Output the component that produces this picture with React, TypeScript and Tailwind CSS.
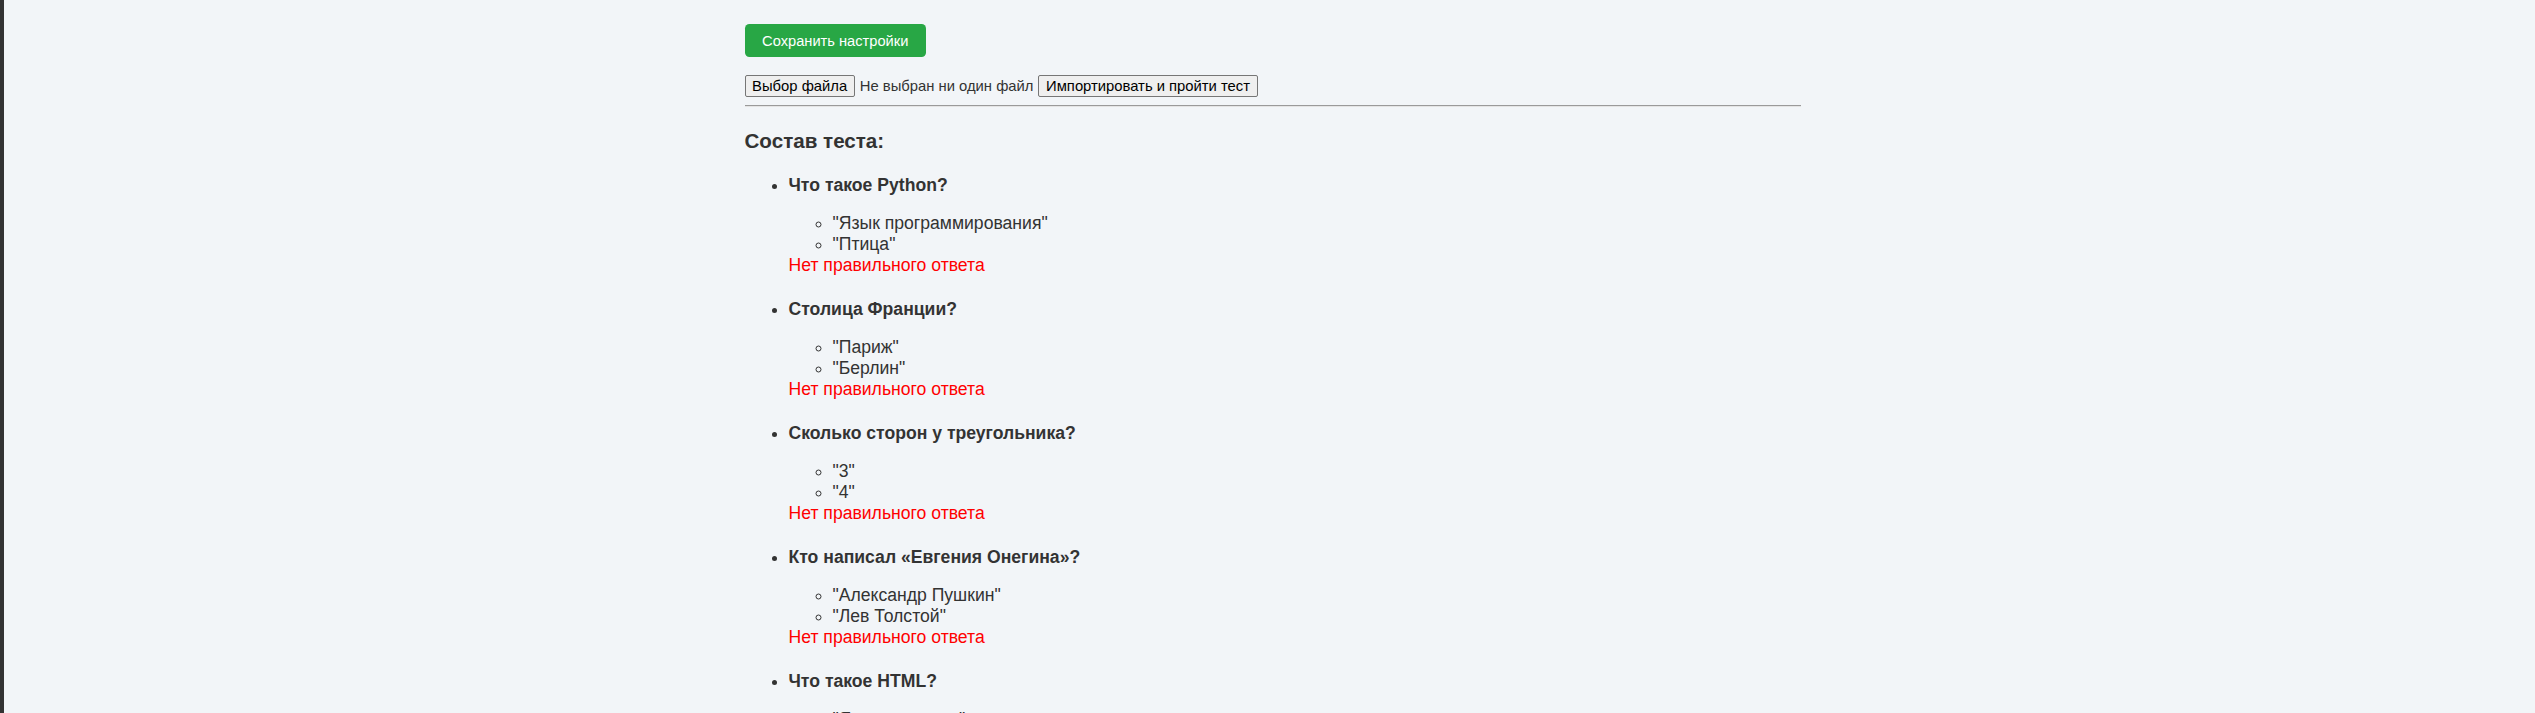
import React from 'react'

const questions = [
  { q: 'Что такое Python?', answers: ['Язык программирования', 'Птица'] },
  { q: 'Столица Франции?', answers: ['Париж', 'Берлин'] },
  { q: 'Сколько сторон у треугольника?', answers: ['3', '4'] },
  { q: 'Кто написал «Евгения Онегина»?', answers: ['Александр Пушкин', 'Лев Толстой'] },
  { q: 'Что такое HTML?', answers: ['Язык разметки', 'Язык программирования'] },
]

export default function App() {
  return (
    <div className="min-h-screen flex bg-[#f2f5f8] border-l-4 border-[#333] font-['Liberation_Sans',Arial,sans-serif] text-[#333]">
      <main className="flex-1 pl-[6px]">
        <div className="w-[1056px] mx-auto pt-[24px]">
          {/* Settings */}
          <button className="h-[33px] px-[17.6px] bg-[#28a745] text-white text-[14.67px] rounded-[4.4px]">
            Сохранить настройки
          </button>

          {/* Import */}
          <div className="mt-[18px] flex items-center h-[22px] text-[14.8px]">
            <span className="h-[22px] flex items-center px-[6.6px] border border-[#767676] bg-[#efefef] rounded-[2px] text-black">
              Выбор файла
            </span>
            <span className="ml-[5px]">Не выбран ни один файл</span>
            <button className="ml-[5px] h-[22px] flex items-center px-[6.6px] border border-[#767676] bg-[#efefef] rounded-[2px] text-black">
              Импортировать и пройти тест
            </button>
          </div>

          <hr className="mt-[8px] border-t border-[#9a9a9a] border-b border-b-[#e4e4e4]" />

          {/* Test contents */}
          <h3 className="mt-[22px] text-[20.6px] leading-[24px] font-bold">Состав теста:</h3>
          <ul className="mt-[22px] list-disc pl-[44px] text-[17.6px] leading-[21px]">
            {questions.map((item, i) => (
              <li key={i} className="mb-[22.7px]">
                <div className="font-bold">{item.q}</div>
                <ul className="mt-[17.3px] list-[circle] pl-[44px]">
                  {item.answers.map((a, j) => (
                    <li key={j}>"{a}"</li>
                  ))}
                </ul>
                <div className="text-[#ff0000]">Нет правильного ответа</div>
              </li>
            ))}
          </ul>
        </div>
      </main>
    </div>
  )
}
